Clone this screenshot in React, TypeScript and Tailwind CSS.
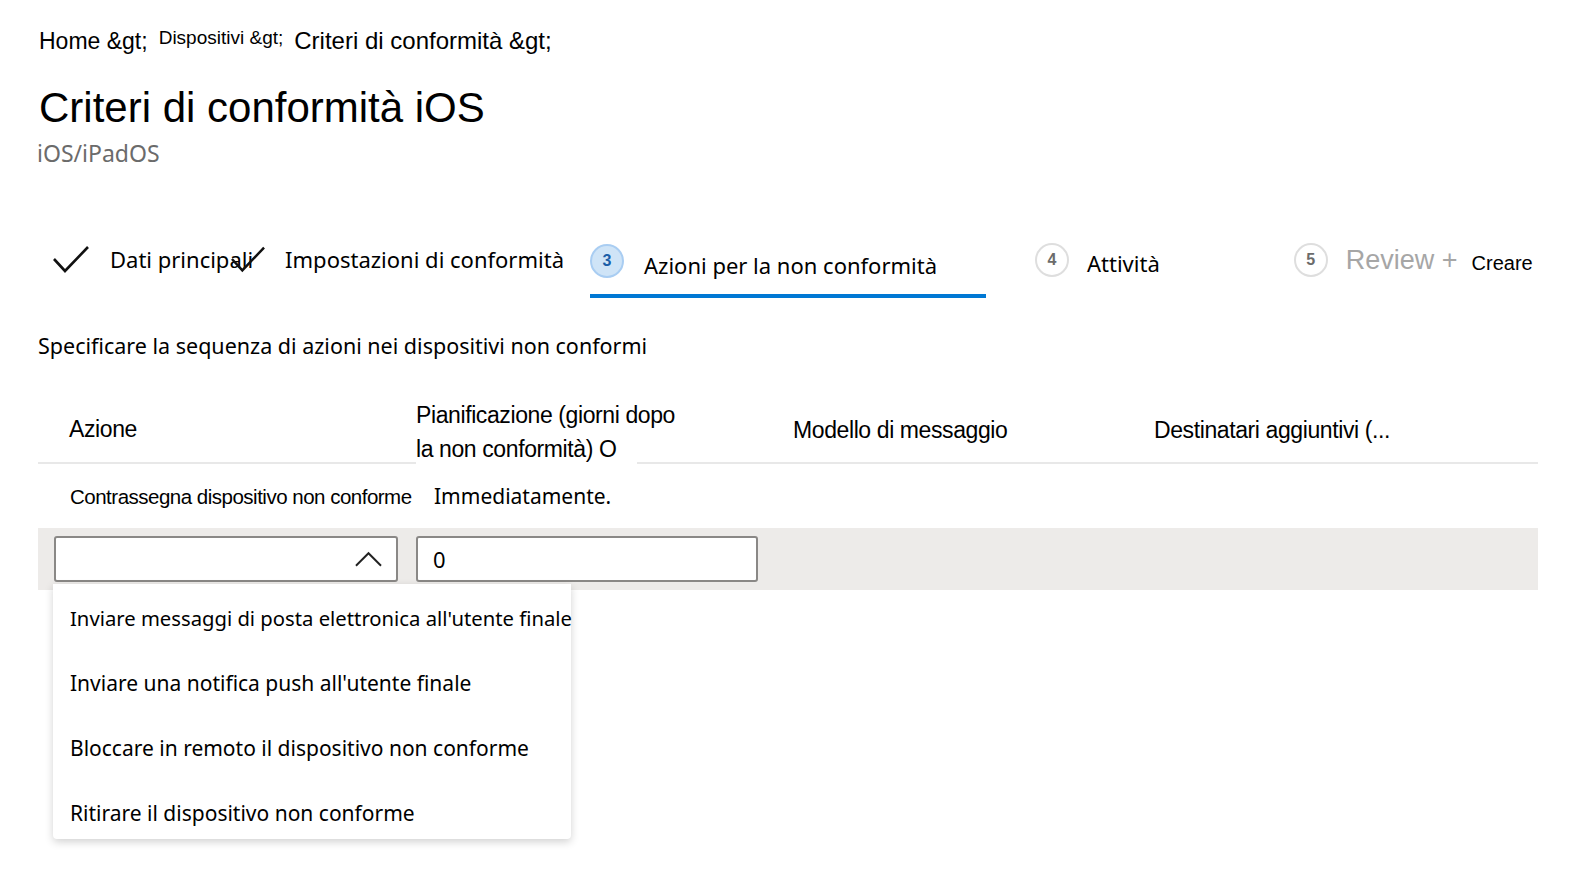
import React from "react";

const arial = "font-['Liberation_Sans',Arial,sans-serif]";
const segoe = "font-['Noto_Sans','Open_Sans',sans-serif]";

const Check = ({ className = "" }: { className?: string }) => (
  <svg viewBox="0 0 36 28" className={className} fill="none" stroke="#111" strokeWidth="2.6">
    <path d="M1 14 L12 26 L35 2" />
  </svg>
);

const StepCircle = ({ n, active }: { n: number; active?: boolean }) => (
  <div
    className={
      active
        ? "flex h-[34px] w-[34px] shrink-0 items-center justify-center rounded-full border-2 border-[#a9cdf2] bg-[#cfe4f7] text-[16px] font-bold text-[#1a5ea8] " + arial
        : "flex h-[34px] w-[34px] shrink-0 items-center justify-center rounded-full border-2 border-[#dedede] bg-white text-[16px] font-bold text-[#6b6b6b] " + arial
    }
  >
    {n}
  </div>
);

const options = [
  { label: "Inviare messaggi di posta elettronica all'utente finale", size: "text-[20.25px]" },
  { label: "Inviare una notifica push all'utente finale", size: "text-[21px]" },
  { label: "Bloccare in remoto il dispositivo non conforme", size: "text-[21px]" },
  { label: "Ritirare il dispositivo non conforme", size: "text-[21px]" },
];

export default function App() {
  return (
    <div className="relative h-[892px] w-[1592px] overflow-hidden bg-white text-black">
      {/* Breadcrumb */}
      <div className={"flex items-start pl-[39px] pt-[27px] " + arial}>
        <span className="text-[23px] leading-[28px]">Home &amp;gt;</span>
        <span className="ml-[11px] text-[19px] leading-[22px]">Dispositivi &amp;gt;</span>
        <span className="ml-[11px] text-[24px] leading-[28px]">Criteri di conformità &amp;gt;</span>
      </div>

      {/* Title */}
      <h1 className={"mt-[28px] pl-[39px] text-[42px] leading-[50px] " + arial}>Criteri di conformità iOS</h1>
      <div className={"mt-[6px] pl-[37px] text-[23px] leading-[28px] text-[#6b6b6b] " + segoe}>iOS/iPadOS</div>

      {/* Wizard steps */}
      <div className={"relative mt-[69px] flex h-[64px] items-start text-[22px] " + segoe}>
        <div className="flex items-center pl-[53px] pt-[8px]">
          <Check className="h-[28px] w-[36px]" />
          <span className="ml-[21px] leading-[30px]">Dati principali</span>
          <Check className="-ml-[22px] h-[28px] w-[34px]" />
          <span className="ml-[20px] leading-[30px]">Impostazioni di conformità</span>
        </div>
        <div className="ml-[26px] flex h-[62px] w-[396px] flex-col border-b-4 border-[#0078d4]">
          <div className="flex items-center pt-[6px]">
            <StepCircle n={3} active />
            <span className="ml-[20px] mt-[8px] leading-[30px]">Azioni per la non conformità</span>
          </div>
        </div>
        <div className="ml-[49px] flex items-center pt-[6px]">
          <StepCircle n={4} />
          <span className="ml-[18px] mt-[6px] leading-[30px]">Attività</span>
        </div>
        <div className="ml-[134px] flex items-center pt-[6px]">
          <StepCircle n={5} />
          <span className={"ml-[18px] text-[27px] leading-[30px] text-[#a6a6a6] " + arial}>Review +</span>
          <span className={"ml-[14px] mt-[6px] text-[20px] leading-[30px] " + arial}>Creare</span>
        </div>
      </div>

      {/* Description */}
      <p className={"mt-[31px] pl-[38px] text-[21.5px] leading-[30px] " + segoe}>
        Specificare la sequenza di azioni nei dispositivi non conformi
      </p>

      {/* Table */}
      <div className={"mx-[38px] mt-[31px] w-[1500px] " + arial}>
        <div className="flex h-[72px] text-[23px] tracking-[-0.4px]">
          <div className="flex w-[378px] items-center border-b-2 border-[#e8e8e8] pl-[31px] pt-[4px]">Azione</div>
          <div className="flex w-[377px]">
            <div className="w-[221px] whitespace-nowrap pt-[6px] leading-[34px]">
              Pianificazione (giorni dopo
              <br />
              la non conformità) O
            </div>
            <div className="flex-1 border-b-2 border-[#e8e8e8]" />
          </div>
          <div className="flex w-[361px] items-center border-b-2 border-[#e8e8e8] pt-[6px]">Modello di messaggio</div>
          <div className="flex flex-1 items-center border-b-2 border-[#e8e8e8] pt-[6px]">Destinatari aggiuntivi (...</div>
        </div>
        <div className="flex h-[64px] items-center pt-[2px]">
          <div className="w-[378px] whitespace-nowrap pl-[32px] text-[20.5px] tracking-[-0.5px]">Contrassegna dispositivo non conforme</div>
          <div className={"pl-[18px] text-[21px] " + segoe}>Immediatamente.</div>
        </div>
        <div className="flex h-[62px] items-center gap-[18px] bg-[#edebe9] pl-[16px]">
          <div className="flex h-[46px] w-[344px] items-center justify-end rounded-[3px] border-2 border-[#8a8886] bg-white pr-[14px]">
            <svg viewBox="0 0 28 16" className="h-[16px] w-[27px]" fill="none" stroke="#222" strokeWidth="2">
              <path d="M1 15 L14 2 L27 15" />
            </svg>
          </div>
          <div className={"flex h-[46px] w-[342px] items-center rounded-[3px] border-2 border-[#8a8886] bg-white pl-[15px] text-[22px] " + segoe}>
            0
          </div>
        </div>
      </div>

      {/* Dropdown */}
      <div className={"absolute left-[53px] top-[584px] flex h-[255px] w-[518px] flex-col rounded-b-[4px] bg-white pl-[17px] pt-[18px] shadow-[0_3px_8px_rgba(0,0,0,0.18)] " + segoe}>
        {options.map((o) => (
          <div key={o.label} className={"h-[65px] shrink-0 whitespace-nowrap leading-[32px] " + o.size}>
            {o.label}
          </div>
        ))}
      </div>
    </div>
  );
}
